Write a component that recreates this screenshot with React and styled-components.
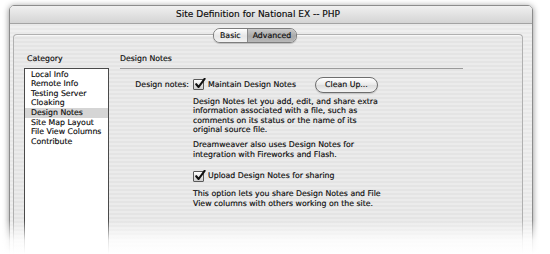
import React from 'react';
import styled, { createGlobalStyle } from 'styled-components';

const GlobalStyle = createGlobalStyle`
  html, body {
    margin: 0;
    padding: 0;
    background: #ffffff;
  }
  body {
    font-family: "DejaVu Sans", "Noto Sans", sans-serif;
    color: #0a0a0a;
  }
`;

const pinstripe = (a, b) => `repeating-linear-gradient(to bottom, ${a} 0px, ${a} 2px, ${b} 2px, ${b} 4px)`;

const categories = [
  'Local Info',
  'Remote Info',
  'Testing Server',
  'Cloaking',
  'Design Notes',
  'Site Map Layout',
  'File View Columns',
  'Contribute',
];

function CheckBox({ checked }) {
  return (
    <Box>
      {checked && (
        <svg width="12" height="12" viewBox="0 0 12 12">
          <path d="M2.2 6.2 L4.6 9 L10.6 0.8" fill="none" stroke="#111" strokeWidth="2.1" strokeLinecap="round" strokeLinejoin="round" />
        </svg>
      )}
    </Box>
  );
}

function App() {
  return (
    <>
      <GlobalStyle />
      <Page>
        <Window>
          <TitleBar>Site Definition for National EX -- PHP</TitleBar>
          <Content>
            <GroupBox>
              <Tabs>
                <Tab>Basic</Tab>
                <Tab selected>Advanced</Tab>
              </Tabs>
              <CategoryColumn>
                <Label>Category</Label>
                <List>
                  {categories.map((c) => (
                    <ListItem key={c} selected={c === 'Design Notes'}>
                      {c}
                    </ListItem>
                  ))}
                </List>
              </CategoryColumn>
              <Panel>
                <Heading>Design Notes</Heading>
                <Form>
                  <FieldLabel>Design notes:</FieldLabel>
                  <Row>
                    <CheckOption>
                      <CheckBox checked />
                      Maintain Design Notes
                    </CheckOption>
                    <Button>Clean Up...</Button>
                  </Row>
                  <Blank />
                  <Paragraph top={4}>
                    Design Notes let you add, edit, and share extra<br />
                    information associated with a file, such as<br />
                    comments on its status or the name of its<br />
                    original source file.
                  </Paragraph>
                  <Blank />
                  <Paragraph top={5}>
                    Dreamweaver also uses Design Notes for<br />
                    integration with Fireworks and Flash.
                  </Paragraph>
                  <Blank />
                  <Row top={11}>
                    <CheckOption>
                      <CheckBox checked />
                      Upload Design Notes for sharing
                    </CheckOption>
                  </Row>
                  <Blank />
                  <Paragraph top={7}>
                    This option lets you share Design Notes and File<br />
                    View columns with others working on the site.
                  </Paragraph>
                </Form>
              </Panel>
            </GroupBox>
          </Content>
        </Window>
        <Fade />
      </Page>
    </>
  );
}

export default App;

const Page = styled.div`
  position: relative;
  width: 550px;
  height: 254px;
  overflow: hidden;
  padding: 5px 0 0 9px;
  box-sizing: border-box;
  font-size: 7.8px;
  line-height: 9.6px;
  -webkit-text-stroke: 0.15px #0a0a0a;
`;

const Window = styled.div`
  width: 524px;
  height: 280px;
  box-sizing: border-box;
  display: flex;
  flex-direction: column;
  border: 1px solid #8c8c8c;
  border-radius: 5px 5px 0 0;
  background: ${pinstripe('#efefef', '#e9e9e9')};
  box-shadow: 0 1px 6px rgba(0, 0, 0, 0.45);
`;

const TitleBar = styled.div`
  height: 17px;
  display: flex;
  align-items: center;
  justify-content: center;
  padding-right: 26px;
  border-bottom: 1px solid #a3a3a3;
  border-radius: 4px 4px 0 0;
  background: linear-gradient(to bottom, #f0f0f0, #d4d4d4);
  font-size: 9px;
`;

const Content = styled.div`
  flex: 1;
  display: flex;
  padding: 10px 9px 0 3px;
`;

const GroupBox = styled.div`
  position: relative;
  flex: 1;
  display: grid;
  grid-template-columns: 85px 1fr;
  column-gap: 11px;
  align-items: start;
  padding: 19px 59px 0 10px;
  border: 1px solid #b0b0b0;
  border-bottom: none;
  border-radius: 4px 4px 0 0;
  background: ${pinstripe('#ebebeb', '#e4e4e4')};
  box-shadow: inset 0 1px 0 #f8f8f8;
`;

const Tabs = styled.div`
  position: absolute;
  top: -7px;
  left: 199px;
  display: flex;
  height: 13px;
  border: 1px solid #7d7d7d;
  border-radius: 7px;
  overflow: hidden;
  box-shadow: 0 1px 1px rgba(0, 0, 0, 0.2);
`;

const Tab = styled.div`
  display: flex;
  align-items: center;
  justify-content: center;
  padding: 0 ${(p) => (p.selected ? '5px' : '6px')};
  font-size: 7.8px;
  background: ${(p) =>
    p.selected
      ? 'linear-gradient(to bottom, #c9c9c9, #a9a9a9 55%, #b8b8b8)'
      : 'linear-gradient(to bottom, #ffffff, #e6e6e6 55%, #f2f2f2)'};
  & + & {
    border-left: 1px solid #8a8a8a;
  }
`;

const CategoryColumn = styled.div`
  display: flex;
  flex-direction: column;
`;

const Label = styled.div`
  padding-left: 3px;
`;

const List = styled.div`
  margin-top: 4px;
  height: 200px;
  padding-top: 1px;
  border: 1px solid #4a4a4a;
  background: #ffffff;
`;

const ListItem = styled.div`
  height: 9.6px;
  padding-left: 6px;
  white-space: nowrap;
  background: ${(p) => (p.selected ? '#d5d5d5' : 'transparent')};
`;

const Panel = styled.div`
  display: flex;
  flex-direction: column;
`;

const Heading = styled.div`
  padding-bottom: 4px;
  border-bottom: 1px solid #9a9a9a;
`;

const Form = styled.div`
  display: grid;
  grid-template-columns: 69px 1fr;
  column-gap: 4px;
  margin-top: 8px;
  align-items: center;
`;

const FieldLabel = styled.div`
  text-align: right;
  white-space: nowrap;
`;

const Blank = styled.div``;

const Row = styled.div`
  display: flex;
  align-items: center;
  height: ${(p) => (p.top ? '12px' : '16px')};
  margin-top: ${(p) => p.top || 0}px;
`;

const CheckOption = styled.div`
  display: flex;
  align-items: center;
  gap: 4px;
  white-space: nowrap;
`;

const Box = styled.div`
  position: relative;
  width: 9px;
  height: 9px;
  border: 1px solid #5a5a5a;
  border-radius: 1px;
  background: linear-gradient(to bottom, #ffffff, #cfcfcf);

  svg {
    position: absolute;
    left: 0;
    top: -2px;
  }
`;

const Button = styled.div`
  margin-left: 19px;
  width: 61px;
  height: 14px;
  display: flex;
  align-items: center;
  justify-content: center;
  border: 1px solid #6e6e6e;
  border-radius: 8px;
  background: linear-gradient(to bottom, #ffffff, #e9e9e9 50%, #dcdcdc 51%, #f4f4f4);
  box-shadow: 0 1px 1px rgba(0, 0, 0, 0.15);
`;

const Paragraph = styled.p`
  margin: ${(p) => p.top}px 0 0 0;
  white-space: nowrap;
`;

const Fade = styled.div`
  position: absolute;
  left: 0;
  right: 0;
  bottom: 0;
  height: 34px;
  background: linear-gradient(to bottom, rgba(255, 255, 255, 0), rgba(255, 255, 255, 0.85) 60%, #ffffff);
  pointer-events: none;
`;
